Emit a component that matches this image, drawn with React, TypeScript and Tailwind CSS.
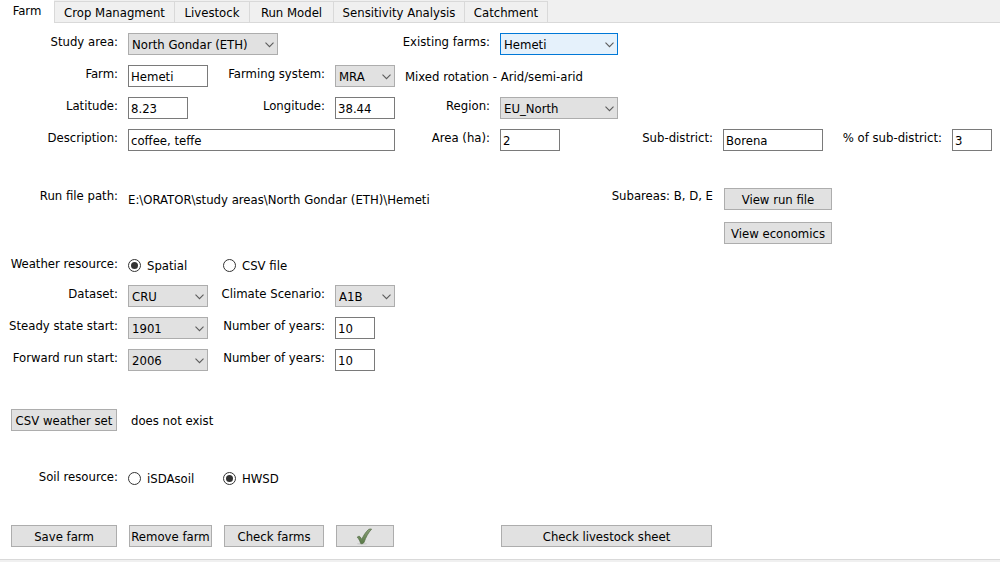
import { useState, type ReactNode } from "react";

const GRID =
  "grid grid-cols-[minmax(0,108fr)_minmax(0,85fr)_minmax(0,102fr)_minmax(0,60fr)_minmax(0,85fr)_minmax(0,118fr)_minmax(0,85fr)_minmax(0,110fr)_minmax(0,99fr)_minmax(0,40fr)] gap-x-[10px] items-start";

const TABS = [
  { name: "Farm", width: "w-[54px]" },
  { name: "Crop Managment", width: "w-[120px]" },
  { name: "Livestock", width: "w-[75px]" },
  { name: "Run Model", width: "w-[84px]" },
  { name: "Sensitivity Analysis", width: "w-[131px]" },
  { name: "Catchment", width: "w-[84px]" },
];

function Label({ htmlFor, children, className = "" }: { htmlFor: string; children: ReactNode; className?: string }) {
  return (
    <label htmlFor={htmlFor} className={`flex justify-end whitespace-nowrap leading-4 pt-px ${className}`}>
      {children}
    </label>
  );
}

function TextField({ id, value, className = "w-full" }: { id: string; value: string; className?: string }) {
  return (
    <input
      id={id}
      type="text"
      defaultValue={value}
      className={`block h-[22px] border border-[#7a7a7a] bg-white px-[2px] pt-px outline-none ${className}`}
    />
  );
}

function Select({
  id,
  options,
  className = "w-full",
  active = false,
}: {
  id: string;
  options: string[];
  className?: string;
  active?: boolean;
}) {
  return (
    <div className={`relative ${className}`}>
      <select
        id={id}
        className={`block h-[22px] w-full appearance-none border pl-[3px] pr-4 pt-px outline-none ${
          active ? "border-[#0078d7] bg-[#e5f1fb]" : "border-[#adadad] bg-[#e1e1e1]"
        }`}
      >
        {options.map((o) => (
          <option key={o}>{o}</option>
        ))}
      </select>
      <svg
        className="pointer-events-none absolute right-1 top-[9px]"
        width="9"
        height="6"
        viewBox="0 0 9 6"
        fill="none"
        stroke="#5c5c5c"
        strokeWidth="1.1"
        aria-hidden="true"
      >
        <path d="M0.5 0.7 4.5 4.7 8.5 0.7" />
      </svg>
    </div>
  );
}

function Button({ children, className = "mx-px", label }: { children: ReactNode; className?: string; label?: string }) {
  return (
    <button
      type="button"
      aria-label={label}
      className={`flex h-[22px] items-center justify-center whitespace-nowrap border border-[#adadad] bg-[#e1e1e1] pt-px ${className}`}
    >
      {children}
    </button>
  );
}

function Radio({ name, label, defaultChecked }: { name: string; label: string; defaultChecked?: boolean }) {
  return (
    <label className="flex h-5 items-center gap-[6px] whitespace-nowrap">
      <input
        type="radio"
        name={name}
        defaultChecked={defaultChecked}
        className="grid size-[13px] shrink-0 appearance-none place-items-center rounded-full border border-[#333] bg-white before:size-[7px] before:rounded-full before:content-[''] checked:before:bg-[#333]"
      />
      <span className="pt-[2px] leading-4">{label}</span>
    </label>
  );
}

function CheckMark() {
  return (
    <svg width="18" height="18" viewBox="0 0 18 18" aria-hidden="true">
      <defs>
        <linearGradient id="tick" x1="0" y1="0" x2="0" y2="1">
          <stop offset="0" stopColor="#8a9f78" />
          <stop offset="1" stopColor="#587a45" />
        </linearGradient>
      </defs>
      <ellipse cx="6" cy="15.8" rx="5" ry="1" fill="#cfcfcf" />
      <path
        d="M1.2 9.2C2.3 8.2 3.4 8 4.1 8.8 4.8 9.6 5.2 10.4 5.7 11.4 7.6 7.4 9.6 4 12.6 1.4 13.6 0.9 14.8 0.9 15.6 1.1 12.2 4.8 9.9 9.2 8.1 14.2 7.3 15.6 5.9 16 4.7 15.5 4.1 13.4 2.9 10.8 1.2 9.2Z"
        fill="url(#tick)"
        stroke="#536b46"
        strokeWidth="0.7"
      />
    </svg>
  );
}

export default function App() {
  const [tab, setTab] = useState("Farm");
  return (
    <main className="min-h-screen bg-[#f0f0f0] font-['DejaVu_Sans_Condensed','DejaVu_Sans',sans-serif] text-[13px] text-black">
      <div role="tablist" className="flex h-[23px] border-b border-[#d9d9d9]">
        {TABS.map(({ name, width }) => (
          <button
            key={name}
            type="button"
            role="tab"
            aria-selected={name === tab}
            onClick={() => setTab(name)}
            className={`shrink-0 whitespace-nowrap ${width} ${
              name === tab
                ? "-mb-px bg-white pb-px"
                : "mt-px flex items-center justify-center border-t border-l border-[#d9d9d9] pt-px last:border-r"
            }`}
          >
            {name}
          </button>
        ))}
      </div>

      <form className="flex flex-col border-b border-[#d9d9d9] bg-white pt-[10px] pr-2 pb-3 pl-[10px]">
        <section className="flex flex-col gap-[10px]">
          <div className={GRID}>
            <Label htmlFor="study">Study area:</Label>
            <Select id="study" options={["North Gondar (ETH)"]} className="col-span-2 w-[150px]" />
            <Label htmlFor="farms" className="col-start-5">Existing farms:</Label>
            <Select id="farms" options={["Hemeti"]} active />
          </div>
          <div className={GRID}>
            <Label htmlFor="farm">Farm:</Label>
            <TextField id="farm" value="Hemeti" className="w-20" />
            <Label htmlFor="system">Farming system:</Label>
            <Select id="system" options={["MRA"]} />
            <p className="col-span-3 whitespace-nowrap pt-1 leading-4">Mixed rotation - Arid/semi-arid</p>
          </div>
          <div className={GRID}>
            <Label htmlFor="lat">Latitude:</Label>
            <TextField id="lat" value="8.23" className="w-[60px]" />
            <Label htmlFor="lon">Longitude:</Label>
            <TextField id="lon" value="38.44" />
            <Label htmlFor="region">Region:</Label>
            <Select id="region" options={["EU_North"]} />
          </div>
          <div className={GRID}>
            <Label htmlFor="desc">Description:</Label>
            <div className="col-span-3">
              <TextField id="desc" value="coffee, teffe" />
            </div>
            <Label htmlFor="area">Area (ha):</Label>
            <TextField id="area" value="2" className="w-[60px]" />
            <Label htmlFor="sub">Sub-district:</Label>
            <TextField id="sub" value="Borena" className="w-[100px]" />
            <Label htmlFor="pct">% of sub-district:</Label>
            <TextField id="pct" value="3" />
          </div>
        </section>

        <section className="mt-[37px] flex flex-col gap-3">
          <div className={GRID}>
            <p className="flex justify-end whitespace-nowrap leading-4">Run file path:</p>
            <p className="col-span-5 whitespace-nowrap pt-1 leading-4">
              E:\ORATOR\study areas\North Gondar (ETH)\Hemeti
            </p>
            <p className="flex justify-end whitespace-nowrap leading-4">Subareas: B, D, E</p>
            <Button>View run file</Button>
          </div>
          <div className={GRID}>
            <Button className="col-start-8 mx-px">View economics</Button>
          </div>
        </section>

        <section className="mt-[11px] flex flex-col gap-[10px]">
          <div role="radiogroup" aria-label="Weather resource" className={GRID}>
            <p className="flex justify-end whitespace-nowrap pt-px leading-4">Weather resource:</p>
            <Radio name="weather" label="Spatial" defaultChecked />
            <Radio name="weather" label="CSV file" />
          </div>
          <div className={GRID}>
            <Label htmlFor="dataset">Dataset:</Label>
            <Select id="dataset" options={["CRU"]} className="w-20" />
            <Label htmlFor="climate">Climate Scenario:</Label>
            <Select id="climate" options={["A1B"]} />
          </div>
          <div className={GRID}>
            <Label htmlFor="steady">Steady state start:</Label>
            <Select id="steady" options={["1901"]} className="w-20" />
            <Label htmlFor="steadyYears">Number of years:</Label>
            <TextField id="steadyYears" value="10" className="w-10" />
          </div>
          <div className={GRID}>
            <Label htmlFor="forward">Forward run start:</Label>
            <Select id="forward" options={["2006"]} className="w-20" />
            <Label htmlFor="forwardYears">Number of years:</Label>
            <TextField id="forwardYears" value="10" className="w-10" />
          </div>
        </section>

        <section className={`mt-[38px] ${GRID}`}>
          <Button>CSV weather set</Button>
          <p className="col-span-2 whitespace-nowrap pl-[3px] pt-1 leading-4">does not exist</p>
        </section>

        <section role="radiogroup" aria-label="Soil resource" className={`mt-[37px] ${GRID}`}>
          <p className="flex justify-end whitespace-nowrap pt-px leading-4">Soil resource:</p>
          <Radio name="soil" label="iSDAsoil" />
          <Radio name="soil" label="HWSD" defaultChecked />
        </section>

        <section className={`mt-[37px] ${GRID}`}>
          <Button>Save farm</Button>
          <Button>Remove farm</Button>
          <Button>Check farms</Button>
          <Button label="Farm check passed">
            <CheckMark />
          </Button>
          <Button className="col-span-2 col-start-6 mx-px">Check livestock sheet</Button>
        </section>
      </form>
    </main>
  );
}
